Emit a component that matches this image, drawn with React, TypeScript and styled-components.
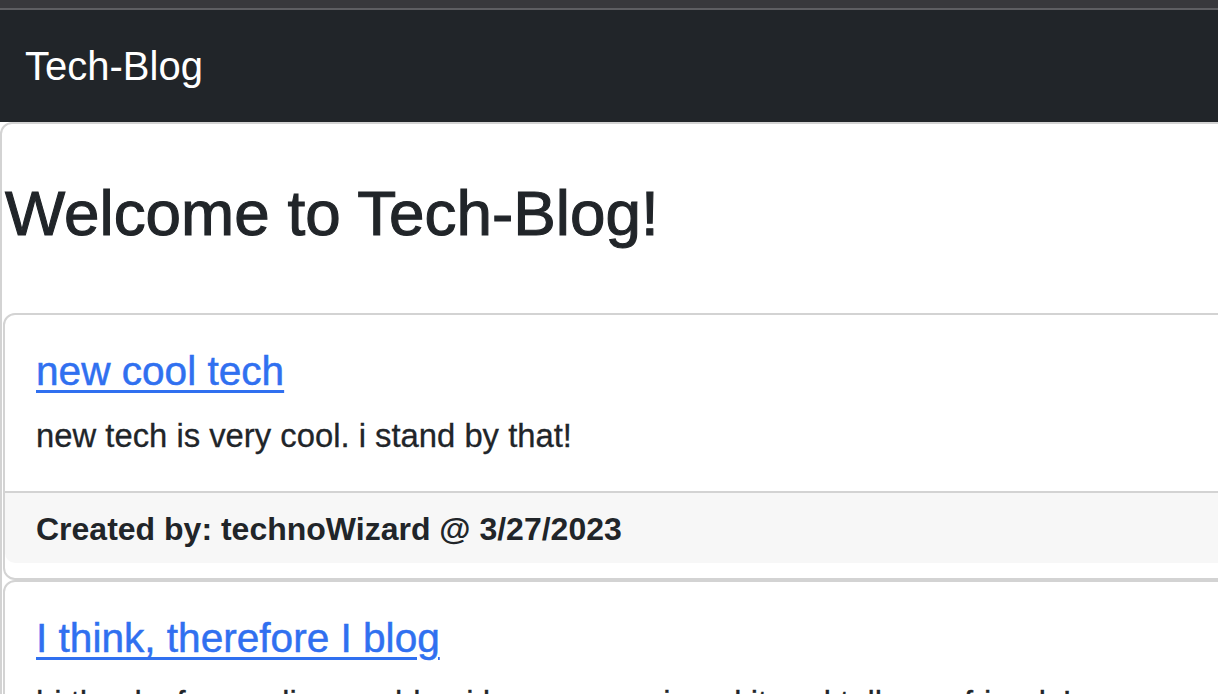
import styled, { createGlobalStyle } from 'styled-components';

const GlobalStyle = createGlobalStyle`
	html, body {
		margin: 0;
		padding: 0;
		overflow: hidden;
		background: #fff;
	}
	body {
		font-family: 'Liberation Sans', Arial, sans-serif;
		color: #212529;
	}
`;

const TopStrip = styled.div`
	height: 8px;
	background: #38383c;
	border-bottom: 2px solid #5e5e62;
`;

const Navbar = styled.nav`
	height: 112px;
	display: flex;
	align-items: center;
	padding-left: 25px;
	background: #212529;
`;

const Brand = styled.a`
	font-size: 40px;
	line-height: 48px;
	color: #fff;
	text-decoration: none;
`;

const Main = styled.main`
	width: 1262px;
	border: 2px solid #d3d3d3;
	border-radius: 12px;
`;

// headings are medium weight in the original; a thin stroke fakes it
const Title = styled.h1`
	margin: 51px 0 62px 3px;
	font-size: 63.8px;
	font-weight: 400;
	line-height: 76px;
	-webkit-text-stroke: 1.1px #212529;
`;

const PostCard = styled.article`
	margin-left: 1px;
	border: 2px solid #d3d3d3;
	border-radius: 12px;
	padding-bottom: 15px;
`;

const PostBody = styled.div`
	padding: 32px 31px 31px;
`;

const PostTitle = styled.a`
	display: block;
	margin-bottom: 17px;
	font-size: 40.6px;
	line-height: 48px;
	color: #3070f0;
	text-decoration: underline;
	text-decoration-thickness: 3px;
	text-underline-offset: 5px;
	-webkit-text-stroke: 0.5px #3070f0;
`;

const PostText = styled.p`
	margin: 0;
	font-size: 32.8px;
	line-height: 48px;
	-webkit-text-stroke: 0.3px #212529;
`;

const PostFooter = styled.div`
	padding: 12px 31px 10px;
	border-top: 2px solid #d3d3d3;
	border-radius: 0 0 10px 10px;
	background: #f7f7f7;
	font-size: 32px;
	font-weight: 700;
	line-height: 48px;
`;

const posts = [
	{
		title: 'new cool tech',
		content: 'new tech is very cool. i stand by that!',
		author: 'technoWizard',
		date: '3/27/2023',
	},
	{
		title: 'I think, therefore I blog',
		content: 'hi thanks for reading my blog i hope you enjoyed it and tell your friends!',
		author: 'technoWizard',
		date: '3/27/2023',
	},
];

export default function App() {
	return (
		<>
			<GlobalStyle />
			<TopStrip />
			<Navbar>
				<Brand href="#">Tech-Blog</Brand>
			</Navbar>
			<Main>
				<Title>Welcome to Tech-Blog!</Title>
				{posts.map((post) => (
					<PostCard key={post.title}>
						<PostBody>
							<PostTitle href="#">{post.title}</PostTitle>
							<PostText>{post.content}</PostText>
						</PostBody>
						<PostFooter>
							Created by: {post.author} @ {post.date}
						</PostFooter>
					</PostCard>
				))}
			</Main>
		</>
	);
}
